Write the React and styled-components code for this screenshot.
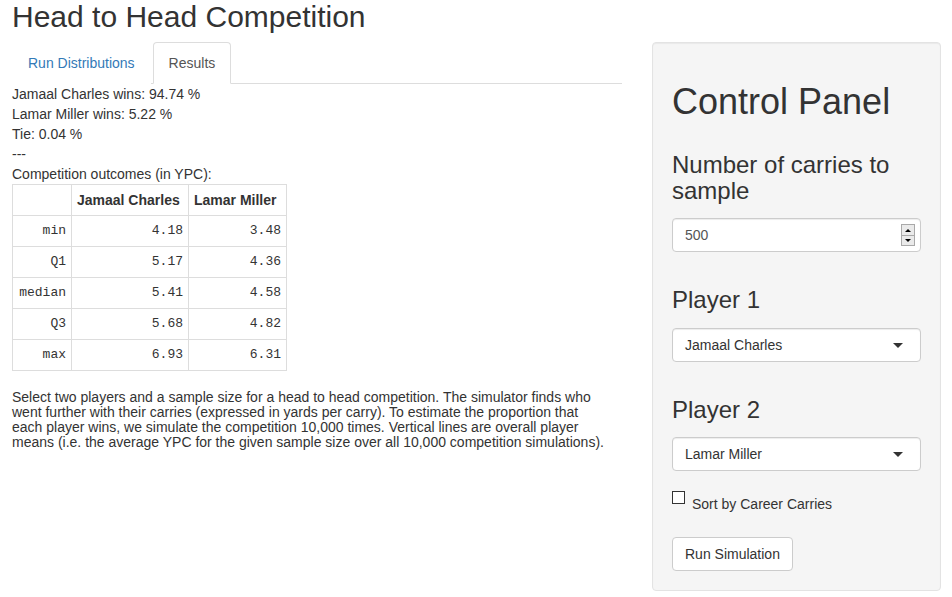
import React from 'react';
import styled, { createGlobalStyle } from 'styled-components';

const GlobalStyle = createGlobalStyle`
  body {
    margin: 0;
    font-family: "Liberation Sans", Arial, sans-serif;
    font-size: 14px;
    line-height: 20px;
    color: #333;
    background: #fff;
  }
  * { box-sizing: border-box; }
`;

const Page = styled.div`
  padding: 0 11px 0 12px;
`;

const Title = styled.h2`
  margin: 0 0 9px;
  font-size: 30px;
  font-weight: 500;
  line-height: 33px;
`;

const Row = styled.div`
  display: flex;
  gap: 30px;
  align-items: flex-start;
`;

const Main = styled.div`
  width: 610px;
`;

const Tabs = styled.ul`
  display: flex;
  margin: 0;
  padding: 0;
  list-style: none;
  border-bottom: 1px solid #ddd;
`;

const Tab = styled.li`
  margin: 0 2px -1px 0;
  padding: 10px 15px;
  line-height: 20px;
  border: 1px solid ${({ $active }) => ($active ? '#ddd' : 'transparent')};
  border-bottom-color: ${({ $active }) => ($active ? '#fff' : 'transparent')};
  border-radius: 4px 4px 0 0;
  background: #fff;
  color: ${({ $active }) => ($active ? '#555' : '#337ab7')};
`;

const Output = styled.div`
  margin: 0;
`;

const Line = styled.div`
  line-height: 20px;
`;

const Table = styled.table`
  border-collapse: collapse;
  margin-bottom: 19px;
`;

const Th = styled.th`
  width: ${({ $w }) => $w}px;
  border: 1px solid #ddd;
  padding: 5px;
  line-height: 20px;
  font-weight: bold;
  text-align: left;
  white-space: nowrap;
`;

const Td = styled.td`
  border: 1px solid #ddd;
  padding: 5px;
  line-height: 20px;
  text-align: right;
  font-family: "Liberation Mono", "Courier New", monospace;
  font-size: 13px;
`;

const Note = styled.p`
  margin: 0;
  line-height: 15px;
`;

const Well = styled.div`
  width: 289px;
  display: flex;
  flex-direction: column;
  align-items: flex-start;
  padding: 19px;
  background: #f5f5f5;
  border: 1px solid #e3e3e3;
  border-radius: 4px;
  box-shadow: inset 0 1px 1px rgba(0, 0, 0, 0.05);
`;

const PanelTitle = styled.h1`
  margin: 20px 0 10px;
  font-size: 36px;
  font-weight: 500;
  line-height: 39.6px;
`;

const FormGroup = styled.div`
  align-self: stretch;
  display: flex;
  flex-direction: column;
  margin-bottom: 15px;
`;

const Label = styled.h3`
  margin: 20px 0 14px;
  font-size: 24px;
  font-weight: 500;
  line-height: 26.4px;
`;

const Field = styled.div`
  position: relative;
  height: 34px;
  padding: 6px 12px;
  display: flex;
  align-items: center;
  background: #fff;
  border: 1px solid #ccc;
  border-radius: 4px;
  box-shadow: inset 0 1px 1px rgba(0, 0, 0, 0.075);
  color: ${({ $muted }) => ($muted ? '#555' : '#333')};
`;

const Spinner = styled.div`
  position: absolute;
  right: 5px;
  top: 5px;
  width: 14px;
  height: 22px;
  display: flex;
  flex-direction: column;
`;

const SpinButton = styled.div`
  flex: 1;
  display: flex;
  align-items: center;
  justify-content: center;
  background: #eaeaea;
  border: 1px solid #a9a9a9;
  & + & { border-top: none; }
  &::after {
    content: '';
    border-left: 3px solid transparent;
    border-right: 3px solid transparent;
    ${({ $up }) => ($up ? 'border-bottom: 3px solid #000;' : 'border-top: 3px solid #000;')}
  }
`;

const Caret = styled.span`
  position: absolute;
  right: 17px;
  top: 14px;
  border-left: 5px solid transparent;
  border-right: 5px solid transparent;
  border-top: 5px solid #333;
`;

const CheckRow = styled.label`
  display: flex;
  align-items: flex-start;
  margin: 5px 0 20px;
  height: 26px;
`;

const Box = styled.input`
  appearance: none;
  width: 13px;
  height: 13px;
  margin: 0 7px 0 0;
  border: 1px solid #333;
  background: #fff;
`;

const CheckText = styled.span`
  padding-top: 3px;
  line-height: 20px;
`;

const Button = styled.button`
  height: 34px;
  padding: 6px 12px;
  font: inherit;
  color: #333;
  background: #fff;
  border: 1px solid #ccc;
  border-radius: 4px;
`;

const stats = [
  ['min', '4.18', '3.48'],
  ['Q1', '5.17', '4.36'],
  ['median', '5.41', '4.58'],
  ['Q3', '5.68', '4.82'],
  ['max', '6.93', '6.31'],
];

export default function App() {
  return (
    <Page>
      <GlobalStyle />
      <Title>Head to Head Competition</Title>
      <Row>
        <Main>
          <Tabs>
            <Tab>Run Distributions</Tab>
            <Tab $active>Results</Tab>
          </Tabs>
          <Output>
            <Line>Jamaal Charles wins: 94.74 %</Line>
            <Line>Lamar Miller wins: 5.22 %</Line>
            <Line>Tie: 0.04 %</Line>
            <Line>---</Line>
            <Line>Competition outcomes (in YPC):</Line>
          </Output>
          <Table>
            <thead>
              <tr>
                <Th $w={59} />
                <Th $w={117}>Jamaal Charles</Th>
                <Th $w={98}>Lamar Miller</Th>
              </tr>
            </thead>
            <tbody>
              {stats.map(([k, a, b]) => (
                <tr key={k}>
                  <Td>{k}</Td>
                  <Td>{a}</Td>
                  <Td>{b}</Td>
                </tr>
              ))}
            </tbody>
          </Table>
          <Note>
            Select two players and a sample size for a head to head competition. The simulator finds who<br />
            went further with their carries (expressed in yards per carry). To estimate the proportion that<br />
            each player wins, we simulate the competition 10,000 times. Vertical lines are overall player<br />
            means (i.e. the average YPC for the given sample size over all 10,000 competition simulations).
          </Note>
        </Main>
        <Well>
          <PanelTitle>Control Panel</PanelTitle>
          <FormGroup>
            <Label>Number of carries to sample</Label>
            <Field $muted>
              500
              <Spinner>
                <SpinButton $up />
                <SpinButton />
              </Spinner>
            </Field>
          </FormGroup>
          <FormGroup>
            <Label>Player 1</Label>
            <Field>
              Jamaal Charles
              <Caret />
            </Field>
          </FormGroup>
          <FormGroup>
            <Label>Player 2</Label>
            <Field>
              Lamar Miller
              <Caret />
            </Field>
          </FormGroup>
          <CheckRow>
            <Box type="checkbox" />
            <CheckText>Sort by Career Carries</CheckText>
          </CheckRow>
          <Button>Run Simulation</Button>
        </Well>
      </Row>
    </Page>
  );
}
